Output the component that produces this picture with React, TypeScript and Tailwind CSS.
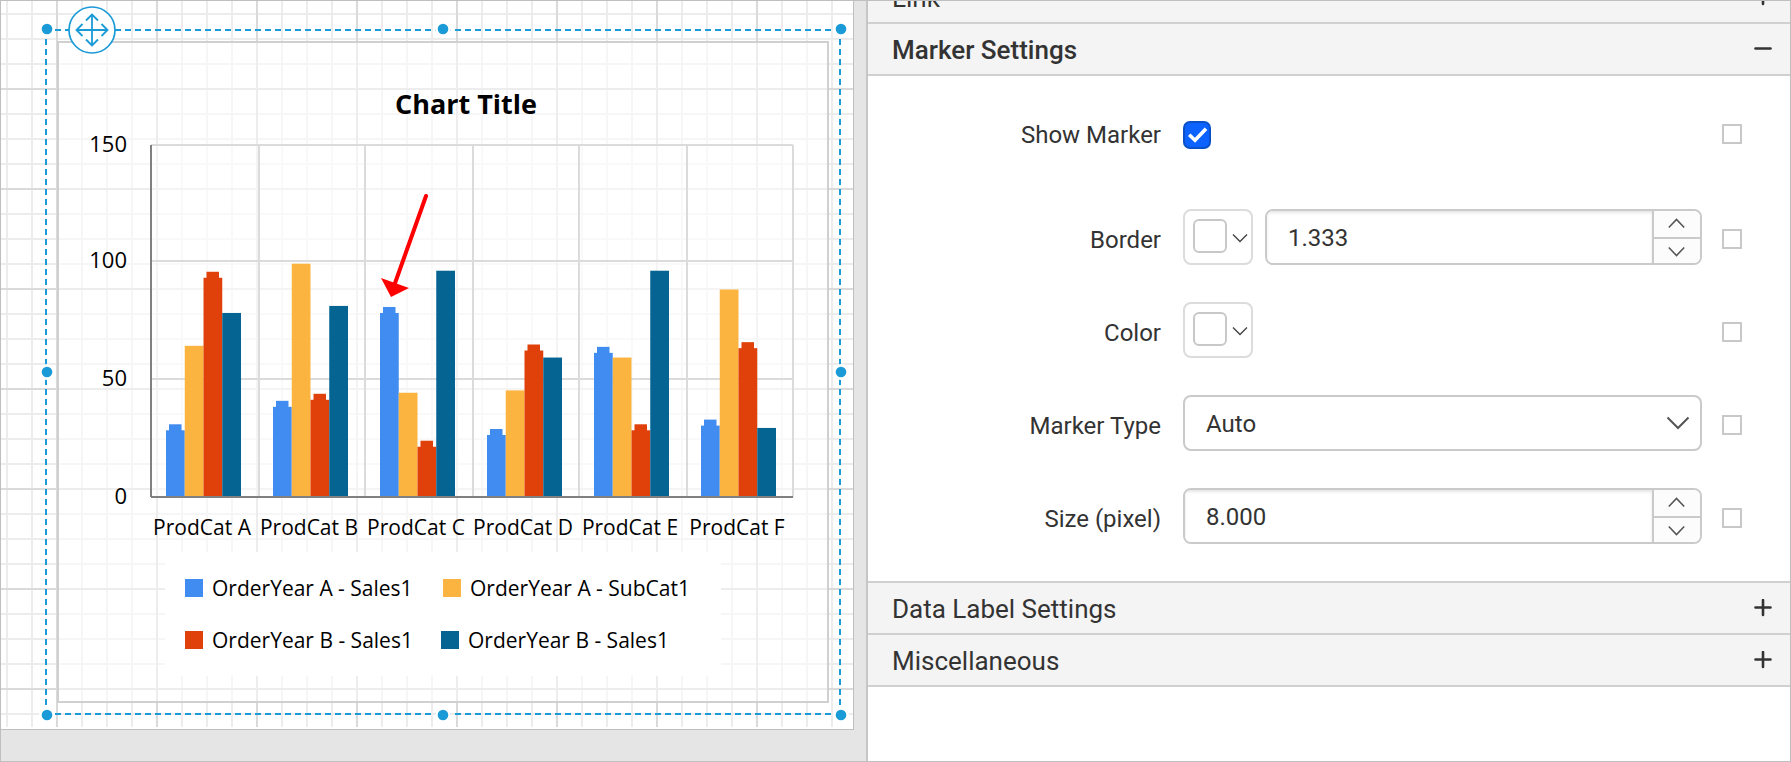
import { useState } from "react";
import type { ReactNode } from "react";

const COLORS = ["#418cf0", "#fcb441", "#e0400a", "#056492"];

const PLOT = { left: 151, right: 793, top: 145, bottom: 497 };
const BASELINE = 496;
const UNIT = 352 / 150;
const STEP = 107;
const BAR = 18.75;

const CATEGORIES = [
  { name: "ProdCat A", values: [28, 64, 93, 78] },
  { name: "ProdCat B", values: [38, 99, 41, 81] },
  { name: "ProdCat C", values: [78, 44, 21, 96] },
  { name: "ProdCat D", values: [26, 45, 62, 59] },
  { name: "ProdCat E", values: [61, 59, 28, 96] },
  { name: "ProdCat F", values: [30, 88, 63, 29] },
];

const Y_TICKS = [
  { label: "150", y: 145 },
  { label: "100", y: 261 },
  { label: "50", y: 379 },
  { label: "0", y: 497 },
];

const X_LINES = [259, 365, 473, 579, 687, 793];

const LEGEND = [
  { label: "OrderYear A - Sales1", x: 185, y: 579 },
  { label: "OrderYear A - SubCat1", x: 443, y: 579 },
  { label: "OrderYear B - Sales1", x: 185, y: 631 },
  { label: "OrderYear B - Sales1", x: 441, y: 631 },
];

const HANDLES = [
  [47, 29], [443, 29], [841, 29],
  [47, 372], [841, 372],
  [47, 715], [443, 715], [841, 715],
];

function GridLines() {
  const vertical = Array.from({ length: 34 }, (_, i) => 7 + i * 25);
  const horizontal = Array.from({ length: 29 }, (_, i) => 14 + i * 25);
  const isMajorX = (x: number) => x % 100 === 57;
  const isMajorY = (y: number) => y % 100 === 89;
  return (
    <g>
      {[false, true].map((major) => (
        <g key={String(major)} stroke={major ? "#dadada" : "#ececec"} strokeWidth="2">
          {vertical.filter((x) => isMajorX(x) === major).map((x) => (
            <line key={x} x1={x} x2={x} y1="1" y2="727" />
          ))}
          {horizontal.filter((y) => isMajorY(y) === major).map((y) => (
            <line key={y} x1="1" x2="854" y1={y} y2={y} />
          ))}
        </g>
      ))}
    </g>
  );
}

function ChartDrawing() {
  return (
    <svg
      className="block font-['Open_Sans','Noto_Sans',sans-serif]"
      width="852"
      height="728"
      viewBox="1 1 852 728"
      role="img"
      aria-label="Column chart of sales by product category"
    >
      <GridLines />

      <rect x="58" y="42" width="770" height="660" fill="#fff" fillOpacity="0.5" />
      <rect x="58" y="42" width="770" height="660" fill="none" stroke="#d0d0d0" strokeWidth="2" />
      <rect x="151" y="145" width="642" height="352" fill="#fff" fillOpacity="0.4" />

      <g stroke="#dbdbdb" strokeWidth="2">
        {X_LINES.map((x) => (
          <line key={x} x1={x} x2={x} y1={PLOT.top} y2={PLOT.bottom} />
        ))}
        {Y_TICKS.slice(0, 3).map((t) => (
          <line key={t.label} x1={PLOT.left} x2={PLOT.right} y1={t.y} y2={t.y} />
        ))}
      </g>

      {CATEGORIES.map((c, i) =>
        c.values.map((v, s) => {
          const x = 166 + i * STEP + s * BAR;
          const top = BASELINE - v * UNIT;
          return (
            <g key={c.name + s} fill={COLORS[s]}>
              <rect x={x} y={top} width={BAR} height={BASELINE - top} />
              {s % 2 === 0 && <rect x={x + 3} y={top - 6} width="12.5" height="7" />}
            </g>
          );
        }),
      )}

      <g stroke="#808080" strokeWidth="2">
        <line x1="151" x2="151" y1="145" y2="497" />
        <line x1="151" x2="793" y1="497" y2="497" />
      </g>

      <text x="466" y="114" textAnchor="middle" fontSize="27" fontWeight="700">
        Chart Title
      </text>

      <g fontSize="22" textAnchor="end">
        {Y_TICKS.map((t) => (
          <text key={t.label} x="127" y={t.y + 7}>
            {t.label}
          </text>
        ))}
      </g>
      <g fontSize="21" textAnchor="middle">
        {CATEGORIES.map((c, i) => (
          <text key={c.name} x={202 + i * STEP} y="535">
            {c.name}
          </text>
        ))}
      </g>

      <rect x="165" y="552" width="556" height="124" fill="#fff" />
      <g fontSize="21">
        {LEGEND.map((l, i) => (
          <g key={i}>
            <rect x={l.x} y={l.y} width="18" height="18" fill={COLORS[i]} />
            <text x={l.x + 27} y={l.y + 17}>
              {l.label}
            </text>
          </g>
        ))}
      </g>

      <line x1="426" y1="196" x2="394" y2="286" stroke="#f00" strokeWidth="4" strokeLinecap="round" />
      <polygon points="381,278 409,288 391,297" fill="#f00" />

      <g stroke="#1a9bd7" strokeWidth="2" strokeDasharray="6 4">
        <line x1="55" x2="834" y1="30" y2="30" />
        <line x1="55" x2="834" y1="714" y2="714" />
        <line x1="46" x2="46" y1="39" y2="706" />
        <line x1="840" x2="840" y1="39" y2="706" />
      </g>
      {HANDLES.map(([x, y]) => (
        <g key={`${x}-${y}`}>
          <circle cx={x} cy={y} r="8" fill="#fff" />
          <circle cx={x} cy={y} r="5.3" fill="#1a9bd7" />
        </g>
      ))}

      <circle cx="92" cy="30" r="23" fill="#fff" stroke="#1a9bd7" strokeWidth="1.7" />
      <g fill="none" stroke="#1a9bd7" strokeWidth="1.8">
        <path d="M76 30H108M92 14V46" />
        <path d="M86 20.5L92 14.5L98 20.5M86 39.5L92 45.5L98 39.5M82.500 24L76.500 30L82.500 36M101.500 24L107.500 30L101.500 36" />
      </g>
    </svg>
  );
}

function Toggle({ open }: { open: boolean }) {
  return (
    <svg width="18" height="18" viewBox="0 0 18 18" stroke="#333" strokeWidth="2.6" strokeLinecap="round">
      <path d={open ? "M1.500 8.500H16.500" : "M1.500 8.500H16.500M9 1V16"} />
    </svg>
  );
}

function SectionHeader({ title, open = false }: { title: string; open?: boolean }) {
  return (
    <h2 className={open ? "font-medium" : "font-normal"}>
      <button
        type="button"
        aria-expanded={open}
        className="flex h-[52px] w-full items-center justify-between border-b-2 border-[#d0d0d0] bg-[#f4f4f4] pr-[18px] pl-6 text-left text-[26px] leading-8"
      >
        <span className="pt-0.5">{title}</span>
        <Toggle open={open} />
      </button>
    </h2>
  );
}

function Row({ id, label, children }: { id: string; label: string; children: ReactNode }) {
  return (
    <div className="grid h-14 grid-cols-[293px_1fr_20px]">
      <label htmlFor={id} className="self-center pt-1.5 text-right">
        {label}
      </label>
      <div className="mr-5 ml-[22px] flex items-center gap-3">{children}</div>
      <button
        type="button"
        aria-label={`${label} options`}
        className="mt-1 size-5 self-center border-2 border-[#c8c8c8] bg-white"
      />
    </div>
  );
}

function ColorPicker({ id, label }: { id?: string; label: string }) {
  return (
    <button
      type="button"
      id={id}
      aria-label={label}
      className="flex h-14 w-[70px] shrink-0 items-start gap-[5px] rounded-lg border-2 border-[#dcdcdc] bg-white pt-2 pl-2"
    >
      <span className="size-[34px] rounded-md border-2 border-[#c8c8c8]" />
      <svg className="mt-3.5" width="16" height="12" viewBox="0 0 16 12" fill="none" stroke="#444" strokeWidth="1.4">
        <path d="M1 1.500L8 8.500L15 1.500" />
      </svg>
    </button>
  );
}

function NumberBox({ id, value }: { id: string; value: string }) {
  const [text, setText] = useState(value);
  return (
    <div className="flex h-14 min-w-0 flex-1 overflow-hidden rounded-lg border-2 border-[#cacaca]">
      <input
        id={id}
        value={text}
        onChange={(e) => setText(e.target.value)}
        className="min-w-0 flex-1 bg-white pt-0.5 pl-[21px] shadow-[inset_0_2px_3px_rgba(0,0,0,0.1)] outline-none"
      />
      <div className="flex w-12 flex-col border-l-2 border-[#cacaca] bg-[#fcfcfc]">
        <button type="button" aria-label="Increase" className="flex h-7 items-center justify-center border-b-2 border-[#cacaca]">
          <svg width="18" height="12" viewBox="0 0 18 12" fill="none" stroke="#555" strokeWidth="1.6">
            <path d="M0.800 9.500L8.500 1.500L16.200 9.500" />
          </svg>
        </button>
        <button type="button" aria-label="Decrease" className="flex flex-1 items-center justify-center">
          <svg width="18" height="12" viewBox="0 0 18 12" fill="none" stroke="#555" strokeWidth="1.6">
            <path d="M0.800 2.500L8.500 10.500L16.200 2.500" />
          </svg>
        </button>
      </div>
    </div>
  );
}

export default function App() {
  const [show, setShow] = useState(true);
  return (
    <div className="flex h-screen overflow-hidden border border-[#bfbfbf] bg-white font-[Roboto,sans-serif] text-[#333]">
      <main className="shrink-0 border-r-2 border-[#c6c6c6] bg-[#e5e5e5] pr-3">
        <div className="border-r border-b border-[#bfbfbf] bg-white">
          <ChartDrawing />
        </div>
      </main>

      <aside className="min-w-0 flex-1">
        <div className="-mt-[29px]">
          <SectionHeader title="Link" />
        </div>
        <SectionHeader title="Marker Settings" open />
        <div className="flex flex-col gap-[37px] border-b-2 border-[#d0d0d0] pt-7 pr-12 pb-[37px] text-[24px] leading-7">
          <div className="mb-3">
            <Row id="show-marker" label="Show Marker">
              <span className="relative mt-1.5 block size-7">
                <input
                  id="show-marker"
                  type="checkbox"
                  checked={show}
                  onChange={(e) => setShow(e.target.checked)}
                  className="peer block size-7 appearance-none rounded-[7px] border-2 border-[#c8c8c8] bg-white checked:border-[#0a50c8] checked:bg-[#0d63ff]"
                />
                <svg
                  className="pointer-events-none absolute inset-0 hidden peer-checked:block"
                  width="28"
                  height="28"
                  viewBox="0 0 28 28"
                  fill="none"
                  stroke="#fff"
                  strokeWidth="3.6"
                >
                  <path d="M6.200 13.800L12 19.200L23 7.800" />
                </svg>
              </span>
            </Row>
          </div>
          <Row id="border-width" label="Border">
            <ColorPicker label="Border color" />
            <NumberBox id="border-width" value="1.333" />
          </Row>
          <Row id="marker-color" label="Color">
            <ColorPicker id="marker-color" label="Color" />
          </Row>
          <Row id="marker-type" label="Marker Type">
            <div className="relative flex-1">
              <select
                id="marker-type"
                defaultValue="Auto"
                className="block h-14 w-full appearance-none rounded-lg border-2 border-[#cacaca] bg-white pt-0.5 pr-12 pl-[21px] outline-none"
              >
                <option>Auto</option>
              </select>
              <svg
                className="pointer-events-none absolute top-5 right-3"
                width="24"
                height="16"
                viewBox="0 0 24 16"
                fill="none"
                stroke="#555"
                strokeWidth="2"
              >
                <path d="M1.500 2.500L12 13L22.500 2.500" />
              </svg>
            </div>
          </Row>
          <Row id="marker-size" label="Size (pixel)">
            <NumberBox id="marker-size" value="8.000" />
          </Row>
        </div>
        <SectionHeader title="Data Label Settings" />
        <SectionHeader title="Miscellaneous" />
      </aside>
    </div>
  );
}
